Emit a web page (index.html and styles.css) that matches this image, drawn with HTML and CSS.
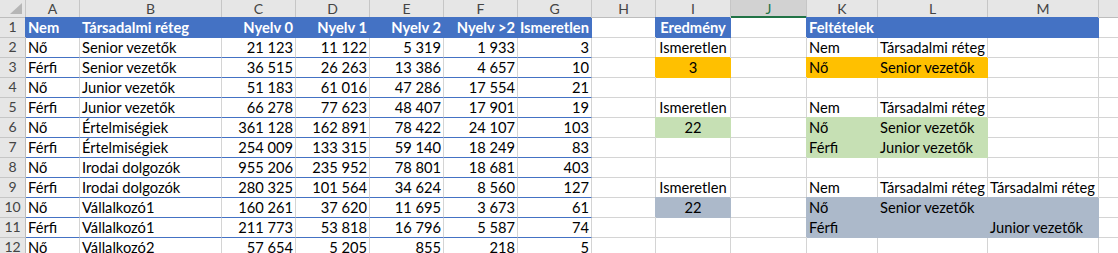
FILE: index.html
```html
<!DOCTYPE html>
<html lang="hu">
<head>
<meta charset="utf-8">
<title>Munkalap</title>
<link rel="stylesheet" href="styles.css">
</head>
<body>
<div class="sheet">
  <div class="c hd corner"><svg width="25" height="17" viewBox="0 0 25 17"><polygon points="22,3 22,14 10,14" fill="#b6b6b6"/></svg></div>
  <div class="c hd">A</div><div class="c hd">B</div><div class="c hd">C</div><div class="c hd">D</div><div class="c hd">E</div><div class="c hd">F</div><div class="c hd">G</div><div class="c hd">H</div><div class="c hd">I</div><div class="c hd sel">J</div><div class="c hd">K</div><div class="c hd">L</div><div class="c hd">M</div><div class="c hd last"></div>

  <div class="c rh">1</div>
  <div class="c th">Nem</div><div class="c th">Társadalmi réteg</div><div class="c th r">Nyelv 0</div><div class="c th r">Nyelv 1</div><div class="c th r">Nyelv 2</div><div class="c th r">Nyelv &gt;2</div><div class="c th r">Ismeretlen</div>
  <div class="c"></div><div class="c th m">Eredmény</div><div class="c"></div><div class="c th">Feltételek</div><div class="c th"></div><div class="c th"></div><div class="c last"></div>

  <div class="c rh">2</div>
  <div class="c td">Nő</div><div class="c td">Senior vezetők</div><div class="c td r">21 123</div><div class="c td r">11 122</div><div class="c td r">5 319</div><div class="c td r">1 933</div><div class="c td r">3</div>
  <div class="c"></div><div class="c m">Ismeretlen</div><div class="c"></div><div class="c">Nem</div><div class="c">Társadalmi réteg</div><div class="c"></div><div class="c last"></div>

  <div class="c rh">3</div>
  <div class="c td">Férfi</div><div class="c td">Senior vezetők</div><div class="c td r">36 515</div><div class="c td r">26 263</div><div class="c td r">13 386</div><div class="c td r">4 657</div><div class="c td r">10</div>
  <div class="c"></div><div class="c m or">3</div><div class="c"></div><div class="c or">Nő</div><div class="c or">Senior vezetők</div><div class="c"></div><div class="c last"></div>

  <div class="c rh">4</div>
  <div class="c td">Nő</div><div class="c td">Junior vezetők</div><div class="c td r">51 183</div><div class="c td r">61 016</div><div class="c td r">47 286</div><div class="c td r">17 554</div><div class="c td r">21</div>
  <div class="c"></div><div class="c"></div><div class="c"></div><div class="c"></div><div class="c"></div><div class="c"></div><div class="c last"></div>

  <div class="c rh">5</div>
  <div class="c td">Férfi</div><div class="c td">Junior vezetők</div><div class="c td r">66 278</div><div class="c td r">77 623</div><div class="c td r">48 407</div><div class="c td r">17 901</div><div class="c td r">19</div>
  <div class="c"></div><div class="c m">Ismeretlen</div><div class="c"></div><div class="c">Nem</div><div class="c">Társadalmi réteg</div><div class="c"></div><div class="c last"></div>

  <div class="c rh">6</div>
  <div class="c td">Nő</div><div class="c td">Értelmiségiek</div><div class="c td r">361 128</div><div class="c td r">162 891</div><div class="c td r">78 422</div><div class="c td r">24 107</div><div class="c td r">103</div>
  <div class="c"></div><div class="c m gr">22</div><div class="c"></div><div class="c gr">Nő</div><div class="c gr">Senior vezetők</div><div class="c"></div><div class="c last"></div>

  <div class="c rh">7</div>
  <div class="c td">Férfi</div><div class="c td">Értelmiségiek</div><div class="c td r">254 009</div><div class="c td r">133 315</div><div class="c td r">59 140</div><div class="c td r">18 249</div><div class="c td r">83</div>
  <div class="c"></div><div class="c"></div><div class="c"></div><div class="c gr">Férfi</div><div class="c gr">Junior vezetők</div><div class="c"></div><div class="c last"></div>

  <div class="c rh">8</div>
  <div class="c td">Nő</div><div class="c td">Irodai dolgozók</div><div class="c td r">955 206</div><div class="c td r">235 952</div><div class="c td r">78 801</div><div class="c td r">18 681</div><div class="c td r">403</div>
  <div class="c"></div><div class="c"></div><div class="c"></div><div class="c"></div><div class="c"></div><div class="c"></div><div class="c last"></div>

  <div class="c rh">9</div>
  <div class="c td">Férfi</div><div class="c td">Irodai dolgozók</div><div class="c td r">280 325</div><div class="c td r">101 564</div><div class="c td r">34 624</div><div class="c td r">8 560</div><div class="c td r">127</div>
  <div class="c"></div><div class="c m">Ismeretlen</div><div class="c"></div><div class="c">Nem</div><div class="c">Társadalmi réteg</div><div class="c">Társadalmi réteg</div><div class="c last"></div>

  <div class="c rh">10</div>
  <div class="c td">Nő</div><div class="c td">Vállalkozó1</div><div class="c td r">160 261</div><div class="c td r">37 620</div><div class="c td r">11 695</div><div class="c td r">3 673</div><div class="c td r">61</div>
  <div class="c"></div><div class="c m bg">22</div><div class="c"></div><div class="c bg">Nő</div><div class="c bg">Senior vezetők</div><div class="c bg"></div><div class="c last"></div>

  <div class="c rh">11</div>
  <div class="c td">Férfi</div><div class="c td">Vállalkozó1</div><div class="c td r">211 773</div><div class="c td r">53 818</div><div class="c td r">16 796</div><div class="c td r">5 587</div><div class="c td r">74</div>
  <div class="c"></div><div class="c"></div><div class="c"></div><div class="c bg">Férfi</div><div class="c bg"></div><div class="c bg">Junior vezetők</div><div class="c last"></div>

  <div class="c rh">12</div>
  <div class="c td">Nő</div><div class="c td">Vállalkozó2</div><div class="c td r">57 654</div><div class="c td r">5 205</div><div class="c td r">855</div><div class="c td r">218</div><div class="c td r">5</div>
  <div class="c"></div><div class="c"></div><div class="c"></div><div class="c"></div><div class="c"></div><div class="c"></div><div class="c last"></div>
</div>
</body>
</html>
```
FILE: styles.css
```css
html, body {
  margin: 0;
  padding: 0;
  background: #fff;
  overflow: hidden;
}
.sheet {
  display: grid;
  grid-template-columns: 26px 54px 142px 74px 74px 74px 74px 74px 64px 75px 76px 71px 110px 111px 1fr;
  grid-template-rows: 18px repeat(12, 20px);
  width: 1118px;
  font-family: Lato, "Liberation Sans", sans-serif;
  font-size: 14.7px;
  color: #000;
}
.c {
  box-sizing: border-box;
  border-right: 1px solid #d4d4d4;
  border-bottom: 1px solid #d4d4d4;
  display: flex;
  align-items: flex-end;
  padding: 0 2px 1px 2px;
  white-space: nowrap;
  line-height: 18px;
  min-width: 0;
}
.hd {
  background: #e6e6e6;
  border-right-color: #c6c6c6;
  border-bottom-color: #bdbdbd;
  justify-content: center;
  align-items: center;
  padding: 0;
  color: #444;
  font-size: 14px;
  line-height: 17px;
}
.corner { padding: 0; align-items: stretch; }
.corner svg { display: block; }
.sel {
  background: #d2d2d2;
  color: #217346;
  border-bottom: 2px solid #217346;
}
.rh {
  background: #e6e6e6;
  border-right-color: #bdbdbd;
  border-bottom-color: #c6c6c6;
  justify-content: center;
  padding: 0 0 1px 0;
  color: #444;
  font-size: 14px;
}
.last { border-right: none; }
.th {
  background: #4472c4;
  color: #fff;
  font-weight: 700;
  border-right-color: #4472c4;
  border-bottom-color: #4472c4;
  box-shadow: -1px -1px 0 0 #4472c4;
}
.td { border-bottom-color: #4472c4; }
.r { justify-content: flex-end; }
.m { justify-content: center; }
.or {
  background: #ffc000;
  border-right-color: #ffc000;
  border-bottom-color: #ffc000;
  box-shadow: -1px -1px 0 0 #ffc000;
}
.gr {
  background: #c6e0b4;
  border-right-color: #c6e0b4;
  border-bottom-color: #c6e0b4;
  box-shadow: -1px -1px 0 0 #c6e0b4;
}
.bg {
  background: #acb9ca;
  border-right-color: #acb9ca;
  border-bottom-color: #acb9ca;
  box-shadow: -1px -1px 0 0 #acb9ca;
}
```
